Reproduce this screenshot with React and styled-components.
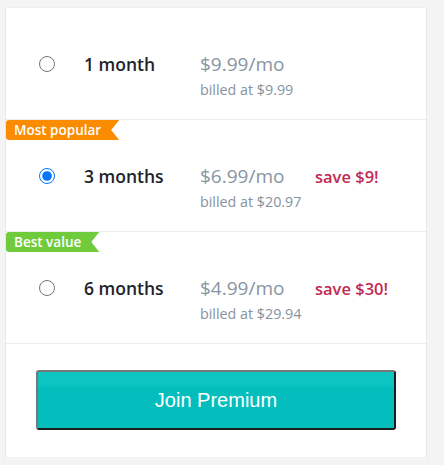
import React, { useState } from "react";
import styled, { createGlobalStyle } from "styled-components";

const plans = [
  { id: "1m", label: "1 month", price: "$9.99/mo", billed: "billed at $9.99" },
  {
    id: "3m",
    label: "3 months",
    price: "$6.99/mo",
    billed: "billed at $20.97",
    save: "save $9!",
    badge: "Most popular",
    tone: "orange",
  },
  {
    id: "6m",
    label: "6 months",
    price: "$4.99/mo",
    billed: "billed at $29.94",
    save: "save $30!",
    badge: "Best value",
    tone: "green",
  },
];

function App() {
  const [selected, setSelected] = useState("3m");

  return (
    <>
      <GlobalStyle />
      <Card>
        {plans.map((plan) => (
          <PlanRow key={plan.id}>
            {plan.badge && <Badge $tone={plan.tone}>{plan.badge}</Badge>}
            <RadioCell>
              <Radio
                type="radio"
                name="plan"
                checked={selected === plan.id}
                onChange={() => setSelected(plan.id)}
              />
            </RadioCell>
            <Label>{plan.label}</Label>
            <PriceBlock>
              <Price>{plan.price}</Price>
              <Billed>{plan.billed}</Billed>
            </PriceBlock>
            {plan.save && <Save>{plan.save}</Save>}
          </PlanRow>
        ))}
        <Footer>
          <JoinButton>Join Premium</JoinButton>
        </Footer>
      </Card>
    </>
  );
}

const GlobalStyle = createGlobalStyle`
  body {
    margin: 0;
    background: #f4f4f4;
    font-family: "Open Sans", "Noto Sans", sans-serif;
  }
`;

const Card = styled.div`
  margin: 8px 0 0 6px;
  width: 420px;
  background: #fff;
  box-shadow: 0 1px 2px rgba(0, 0, 0, 0.08), 0 0 0 1px rgba(0, 0, 0, 0.02);
`;

const PlanRow = styled.div`
  position: relative;
  display: flex;
  align-items: flex-start;
  padding: 45px 0 21px 33px;
  border-bottom: 1px solid #ececec;
`;

const badgeColors = {
  orange: "#fb8c00",
  green: "#6fcb3b",
};

const Badge = styled.span`
  position: absolute;
  top: 0;
  left: 0;
  height: 20px;
  padding: 0 18px 0 8px;
  background: ${({ $tone }) => badgeColors[$tone]};
  color: #fff;
  font-size: 13.5px;
  font-weight: 600;
  line-height: 20px;
  border-radius: 3px 0 0 3px;
  clip-path: polygon(0 0, 100% 0, calc(100% - 8px) 50%, 100% 100%, 0 100%);
`;

const RadioCell = styled.div`
  width: 45px;
  height: 22px;
  display: flex;
  align-items: center;
`;

const Radio = styled.input`
  width: 16px;
  height: 16px;
  margin: 0;
`;

const Label = styled.div`
  width: 116px;
  line-height: 22px;
  font-size: 17.5px;
  font-weight: 600;
  color: #1f232b;
`;

const PriceBlock = styled.div`
  width: 115px;
  display: flex;
  flex-direction: column;
`;

const Price = styled.div`
  line-height: 22px;
  font-size: 19px;
  font-weight: 400;
  color: #8795a4;
  white-space: nowrap;
`;

const Billed = styled.div`
  margin-top: 7px;
  line-height: 16px;
  font-size: 14.3px;
  color: #8793a0;
  white-space: nowrap;
`;

const Save = styled.div`
  line-height: 24px;
  font-size: 16.5px;
  font-weight: 600;
  color: #c12a52;
  white-space: nowrap;
`;

const Footer = styled.div`
  padding: 26px 30px 27px;
`;

const JoinButton = styled.button`
  display: block;
  width: 100%;
  height: 60px;
  border-width: 2px;
  border-style: solid;
  border-color: #767676 #1c1c1c #1c1c1c #767676;
  border-radius: 3px;
  background: linear-gradient(#0cc4c2 0, #0cc4c2 14px, #04bebd 15px, #04bebd 100%);
  color: #fff;
  font-family: "Liberation Sans", Arial, sans-serif;
  font-size: 20px;
  cursor: pointer;
`;

export default App;
